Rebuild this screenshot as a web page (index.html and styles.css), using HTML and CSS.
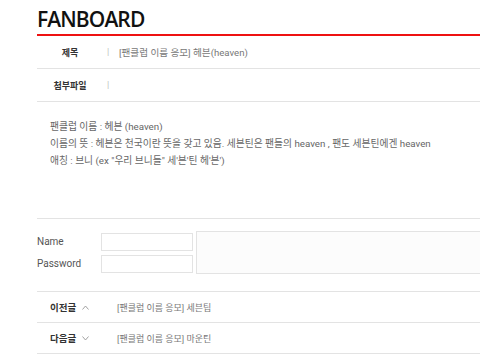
FILE: index.html
```html
<!DOCTYPE html>
<html lang="ko">
<head>
    <meta charset="UTF-8">
    <meta name="viewport" content="width=device-width, initial-scale=1.0">
    <title>FANBOARD</title>
    <link rel="stylesheet" href="styles.css">
</head>
<body>
    <div class="board">
        <h1 class="board-title">FANBOARD</h1>
        <div class="meta-row">
            <span class="meta-label">제목</span>
            <span class="meta-sep">|</span>
            <span class="meta-value">[팬클럽 이름 응모] 헤븐(heaven)</span>
        </div>
        <div class="meta-row">
            <span class="meta-label">첨부파일</span>
            <span class="meta-sep">|</span>
            <span class="meta-value"></span>
        </div>
        <div class="post-body">
            <p>팬클럽 이름 : 헤븐 (heaven)</p>
            <p>이름의 뜻 : 헤븐은 천국이란 뜻을 갖고 있음. 세븐틴은 팬들의 heaven , 팬도 세븐틴에겐 heaven</p>
            <p>애칭 : 브니 (ex "우리 브니들" 세'븐'틴 헤'븐')</p>
        </div>
        <form class="comment-form">
            <div class="fields">
                <label class="field-label" for="name">Name</label>
                <input class="field-input" type="text" id="name">
                <label class="field-label" for="pw">Password</label>
                <input class="field-input" type="password" id="pw">
            </div>
            <textarea class="comment-text"></textarea>
        </form>
        <div class="nav-row first">
            <span class="nav-label">이전글
                <svg class="nav-arrow" width="7" height="5" viewBox="0 0 7 5"><path d="M0.5 4.5 L3.5 1 L6.5 4.5" fill="none" stroke="#999" stroke-width="0.9"/></svg>
            </span>
            <span class="nav-value">[팬클럽 이름 응모] 세븐팁</span>
        </div>
        <div class="nav-row">
            <span class="nav-label">다음글
                <svg class="nav-arrow" width="7" height="5" viewBox="0 0 7 5"><path d="M0.5 0.5 L3.5 4 L6.5 0.5" fill="none" stroke="#999" stroke-width="0.9"/></svg>
            </span>
            <span class="nav-value">[팬클럽 이름 응모] 마운틴</span>
        </div>
    </div>
</body>
</html>
```

FILE: styles.css
```css
html, body {
    margin: 0;
    overflow: hidden;
    background: white;
    font-family: Roboto, "Noto Sans CJK KR", sans-serif;
}
.board {
    margin-left: 37px;
}
.board-title {
    margin: 0;
    padding-top: 6px;
    box-sizing: border-box;
    height: 36px;
    font-family: "Open Sans", sans-serif;
    font-size: 21px;
    line-height: 26px;
    font-weight: 600;
    color: #111;
    letter-spacing: -0.9px;
    border-bottom: 2px solid #e11;
}
.meta-row {
    display: flex;
    align-items: center;
    height: 32px;
    border-bottom: 1px solid #e3e3e3;
    font-size: 9px;
}
.meta-label {
    width: 66px;
    text-align: center;
    font-weight: 700;
    color: #333;
}
.meta-sep {
    width: 12px;
    padding-left: 4px;
    color: #bbb;
}
.meta-value {
    font-size: 9.6px;
    color: #777;
}
.post-body {
    padding: 16px 13px 49px;
    border-bottom: 1px solid #e3e3e3;
    font-size: 9.75px;
    line-height: 17px;
    color: #666;
}
.post-body p {
    margin: 0;
}
.comment-form {
    display: flex;
    gap: 3px;
    padding: 12px 0 17px;
}
.fields {
    display: grid;
    grid-template-columns: 64px 92px;
    row-gap: 4px;
    align-items: center;
    align-self: center;
}
.field-label {
    font-size: 10px;
    color: #555;
}
.field-input {
    box-sizing: border-box;
    height: 18px;
    margin: 0;
    border: 1px solid #e3e3e3;
    background: white;
}
.comment-text {
    flex: 1;
    box-sizing: border-box;
    height: 43px;
    margin: 0;
    border: 1px solid #e3e3e3;
    border-right: 0;
    background: #fcfcfc;
    resize: none;
}
.nav-row {
    display: flex;
    align-items: center;
    height: 30px;
    border-bottom: 1px solid #e3e3e3;
    font-size: 9px;
}
.nav-row.first {
    border-top: 1px solid #e3e3e3;
}
.nav-label {
    display: flex;
    align-items: center;
    gap: 6px;
    width: 67px;
    padding-left: 13px;
    box-sizing: border-box;
    font-weight: 700;
    color: #333;
    font-size: 9.5px;
}
.nav-value {
    padding-left: 13px;
    color: #777;
}
```
